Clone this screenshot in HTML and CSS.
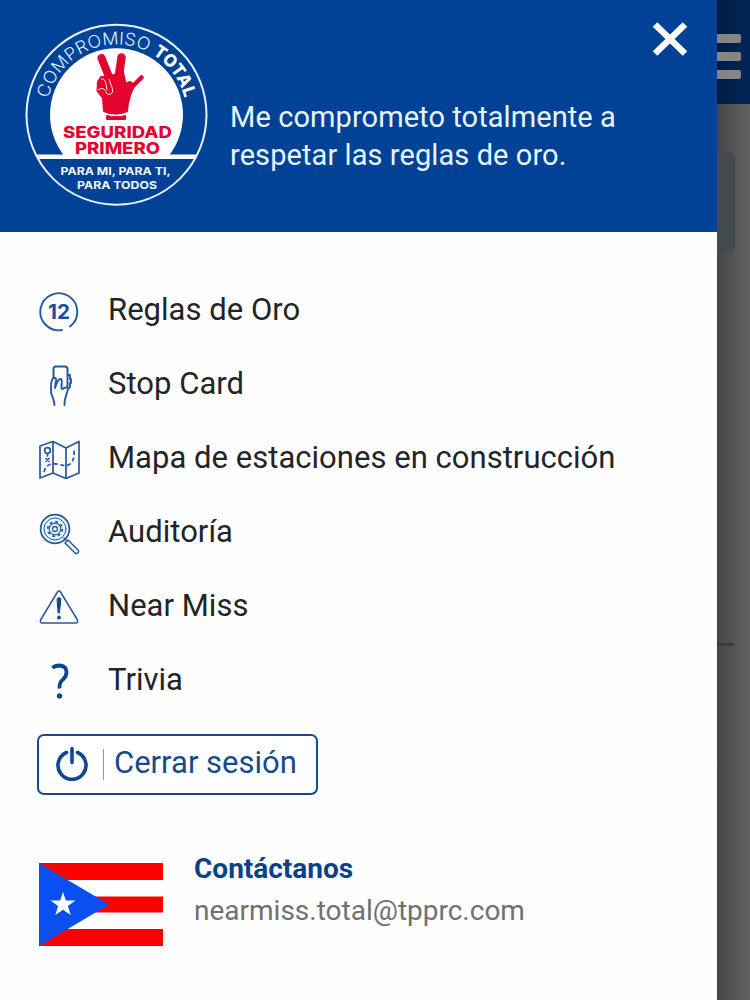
FILE: index.html
```
<!DOCTYPE html>
<html lang="es">
<head>
  <meta charset="UTF-8" />
  <meta name="viewport" content="width=device-width, initial-scale=1.0"/>
  <title>Compromiso Total</title>
  <link rel="stylesheet" href="styles.css">
</head>
<body>
  <div class="app">
    <aside class="drawer">
      <header class="drawer-header">
        <svg class="logo" viewBox="24 22 186 186">
          <defs>
            <path id="arco" d="M46.5 114.5 A70 70 0 0 1 186.5 114.5"/>
            <clipPath id="corte"><rect x="24" y="22" width="186" height="133"/></clipPath>
          </defs>
          <circle cx="116.5" cy="114.7" r="90" fill="none" stroke="#e4f3ff" stroke-width="2"/>
          <circle cx="116.5" cy="114.7" r="66.5" fill="#fff" clip-path="url(#corte)"/>
          <path d="M36.500 154.500 H196.500 L194.500 159 H39 Z" fill="#fff"/>
          <text class="arc-thin"><textPath href="#arco" startOffset="16" textLength="126" lengthAdjust="spacingAndGlyphs">COMPROMISO</textPath></text>
          <text class="arc-bold"><textPath href="#arco" startOffset="147" textLength="56" lengthAdjust="spacingAndGlyphs">TOTAL</textPath></text>
          <!-- mano -->
          <g fill="#e4032e" stroke="#e4032e" stroke-linecap="round" stroke-linejoin="round">
            <path d="M101.500 58 L111 82" stroke-width="8"/>
            <path d="M121.500 57.500 L118 82" stroke-width="8.500"/>
            <path d="M141.500 77.500 L127 92" stroke-width="4.500"/>
            <path d="M108 77 L123 72 L125.500 84 L130 82 L134.500 85 C130 93 129 98 128 103 L127 111 C120 114.500 111 114.500 104 111 L103 98 L97.500 91 L98 82 L101 77 Z" stroke-width="2"/>
            <path d="M107 115.500 Q116 118 125.500 115.500 V119.500 H107 Z" stroke-width="1"/>
          </g>
          <path d="M101 79 Q105 78 106 84 L107 90 M98 90 Q104 86 106 92 Q108 96 111 94 Q114 92 111.500 86 L109 79 M104 113.800 Q116 117 128 113.800" fill="none" stroke="#fff" stroke-width="0.900"/>
          <text class="logo-red" x="63" y="138" textLength="109" lengthAdjust="spacingAndGlyphs">SEGURIDAD</text>
          <text class="logo-red" x="75" y="153.800" textLength="85" lengthAdjust="spacingAndGlyphs">PRIMERO</text>
          <text class="logo-small" x="60.500" y="175" textLength="110" lengthAdjust="spacingAndGlyphs">PARA MI, PARA TI,</text>
          <text class="logo-small" x="77" y="188.500" textLength="80" lengthAdjust="spacingAndGlyphs">PARA TODOS</text>
        </svg>
        <p class="pledge">Me comprometo totalmente a respetar las reglas de oro.</p>
        <svg class="close" viewBox="0 0 40 40"><path d="M5 5.500 L35 34.500 M35 5.500 L5 34.500"/></svg>
      </header>

      <ul class="menu">
        <li>
          <svg class="icon" viewBox="0 0 44 44">
            <path d="M25 40 A18.500 18.500 0 1 1 33 36.500" stroke-width="1.900"/>
            <text class="num" x="22" y="29" textLength="22" lengthAdjust="spacingAndGlyphs" text-anchor="middle">12</text>
          </svg>
          <span>Reglas de Oro</span>
        </li>
        <li>
          <svg class="icon" viewBox="0 0 44 44">
            <path d="M16.500 14 V5 Q16.500 2.500 19 2.500 H28 Q30.500 2.500 30.500 5 V22 Q30.500 24 27 24" stroke-width="2"/>
            <path d="M17.500 41 C17.500 34 13 31 14 25 C14 21 13.500 15 17 14 C19 13 20 16 18.500 19 L18 24 C19.500 19 21 15 23.500 15 C25.500 15 24.500 19 24.500 24 Q25.500 26 27 24 M27.500 41 C27 33 30.500 30 31 25 M31 11 H33 V15 H34 V19 H33 V23 L31 25" stroke-width="1.900"/>
          </svg>
          <span>Stop Card</span>
        </li>
        <li>
          <svg class="icon" viewBox="0 0 44 44">
            <path d="M3 8 L16 3.500 L29 10 L42 3.500 V35 L29 40.500 L16 35 L3 40 Z M16 3.500 V35 M29 10 V40"/>
            <circle cx="10.500" cy="12.500" r="2.900"/>
            <path d="M10.500 16 V18 M9 20.500 l3 3 m0 -3 l-3 3"/>
            <path d="M7 34 Q9 26 16 26 C24 25 27 30 33 26 Q38 22 37 12" stroke-dasharray="4 2.800" stroke-linecap="butt"/>
          </svg>
          <span>Mapa de estaciones en construcción</span>
        </li>
        <li>
          <svg class="icon" viewBox="0 0 44 44">
            <circle cx="18" cy="17" r="14.400" fill="#eaf6ff"/>
            <circle cx="18" cy="17" r="11" stroke-width="1"/>
            <circle cx="18" cy="17" r="7.300" stroke-width="1.800" stroke-dasharray="2.700 3.030" stroke-linecap="butt"/>
            <circle cx="18" cy="17" r="5.800" stroke-width="1.200"/>
            <circle cx="18" cy="17" r="2.500" stroke-width="1.300"/>
            <path d="M28 31 L31 28 L41.500 38.500 Q42 41.500 38.800 41.700 Z M27 26 L30 29" stroke-width="1.500"/>
          </svg>
          <span>Auditoría</span>
        </li>
        <li>
          <svg class="icon" viewBox="0 0 44 44">
            <path d="M20.500 6 Q22 3.500 23.500 6 L40.500 34 Q41 37 39 37 H5 Q3 37 3.500 34 Z" stroke-width="1.500"/>
            <path class="solid" d="M20.200 13 Q22 10 23.800 13 L22.500 27 H21.500 Z"/>
            <circle class="solid" cx="22" cy="31.500" r="1.500"/>
          </svg>
          <span>Near Miss</span>
        </li>
        <li>
          <svg class="icon" viewBox="0 0 44 44">
            <path class="question" d="M15.500 8 Q18 5.500 22.500 5.500 Q29.500 6 29.500 12 Q29.500 16.500 26 19.500 Q22 22.500 22.500 28.500"/>
            <circle class="solid" cx="22.500" cy="36" r="2.300"/>
          </svg>
          <span>Trivia</span>
        </li>
      </ul>

      <button class="logout">
        <svg class="power" viewBox="0 0 34 36">
          <path d="M11.500 7.500 A14 14 0 1 0 22.500 7.500 M17 3.500 V17.500"/>
        </svg>
        <i class="divider"></i>
        <span class="logout-text">Cerrar sesión</span>
      </button>

      <footer class="contact">
        <svg class="flag" viewBox="0 0 124 83" preserveAspectRatio="none">
          <rect width="124" height="83" fill="#fff"/>
          <path d="M0 0 H124 V17 H0 Z M0 33.500 H124 V49.500 H0 Z M0 66 H124 V83 H0 Z" fill="#fe0000"/>
          <path d="M0 0 L70 41.500 L0 83 Z" fill="#0a50f0"/>
          <path d="M24 29 L26.900 37.500 H36.500 L28.900 43 L31.700 52 L24 46.700 L16.300 52 L19.100 43 L11.500 37.500 H21.100 Z" fill="#fff"/>
        </svg>
        <div class="contact-text">
          <strong>Contáctanos</strong>
          <span>nearmiss.total@tpprc.com</span>
        </div>
      </footer>
    </aside>

    <!-- página detrás del menú -->
    <main class="behind">
      <div class="topbar"><i></i><i></i><i></i></div>
      <div class="card"></div>
      <div class="line"></div>
    </main>
  </div>
</body>
</html>
```

FILE: styles.css
```
* {
  margin: 0;
  padding: 0;
  box-sizing: border-box;
}
body {
  font-family: Roboto, sans-serif;
  background-color: #ffffff;
}
.app {
  display: flex;
  height: 1000px;
  overflow: hidden;
}
.drawer {
  width: 717px;
  background: #fefefe;
}
.drawer-header {
  display: flex;
  height: 232px;
  padding: 19px 26px 0 24px;
  background: #014296;
}
.logo {
  width: 186px;
  height: 186px;
  margin-top: 3px;
}
.arc-thin {
  font: 300 17.5px Inter, sans-serif;
  fill: #d9edff;
}
.arc-bold {
  font: 800 17.5px Inter, sans-serif;
  fill: #ffffff;
}
.logo-red {
  font: 800 16px Inter, sans-serif;
  fill: #e4032e;
}
.logo-small {
  font: 700 11px Inter, sans-serif;
  fill: #f1f8ff;
}
.pledge {
  width: 400px;
  margin: 79px 0 0 20px;
  font-size: 29px;
  line-height: 38px;
  letter-spacing: 0.08px;
  color: #e6f5ff;
}
.close {
  width: 40px;
  height: 40px;
  margin-left: auto;
  margin-right: 1px;
  fill: none;
  stroke: #ffffff;
  stroke-width: 6.5;
}

.menu {
  list-style: none;
  padding: 41px 0 0 37px;
}
.menu li {
  display: flex;
  align-items: center;
  height: 74px;
  font-size: 31px;
  letter-spacing: 0.03px;
  color: #242426;
}
.menu span {
  margin-left: 27px;
  padding-bottom: 1px;
}
.icon {
  width: 44px;
  height: 44px;
  margin-top: 4px;
  fill: none;
  stroke: #24599f;
  stroke-width: 1.7;
  stroke-linecap: round;
  stroke-linejoin: round;
}
.icon .solid {
  fill: #0d4690;
  stroke: #0d4690;
  stroke-width: 1;
}
.icon .question {
  stroke: #0d4690;
  stroke-width: 3.8;
  stroke-linecap: butt;
}
.num {
  font: 700 20px Inter, sans-serif;
  fill: #174f9c;
  stroke: none;
}

.logout {
  display: flex;
  align-items: center;
  width: 281px;
  height: 61px;
  margin: 17px 0 0 37px;
  padding-left: 16px;
  background: #ffffff;
  border: 2px solid #174a8c;
  border-radius: 7px;
  font-family: inherit;
  font-size: 31px;
  color: #174a8c;
}
.power {
  width: 34px;
  height: 36px;
  margin-bottom: 3px;
  fill: none;
  stroke: #10488f;
  stroke-width: 3.6;
  stroke-linecap: round;
}
.divider {
  width: 1px;
  height: 31px;
  margin-left: 14px;
  background: #8794ad;
}
.logout-text {
  margin-left: 10px;
  padding-bottom: 4px;
}

.contact {
  display: flex;
  margin: 68px 0 0 39px;
}
.flag {
  width: 124px;
  height: 83px;
}
.contact-text {
  display: flex;
  flex-direction: column;
  margin: -15px 0 0 31px;
  font-size: 28px;
  line-height: 42px;
  color: #707072;
}
.contact-text strong {
  color: #0b4189;
}

.behind {
  width: 33px;
  background: linear-gradient(to right, #454446, #646264);
}
.topbar {
  display: flex;
  flex-direction: column;
  gap: 9px;
  height: 104px;
  padding-top: 34px;
  background: linear-gradient(to right, #001a42, #002759);
}
.topbar i {
  width: 24px;
  height: 9px;
  background: #858585;
  border-radius: 0 2px 2px 0;
}
.card {
  width: 18px;
  height: 100px;
  margin-top: 48px;
  background: #424a4e;
  border-radius: 0 6px 6px 0;
}
.line {
  width: 17px;
  height: 3px;
  margin-top: 391px;
  background: #3b3a3c;
}
```
